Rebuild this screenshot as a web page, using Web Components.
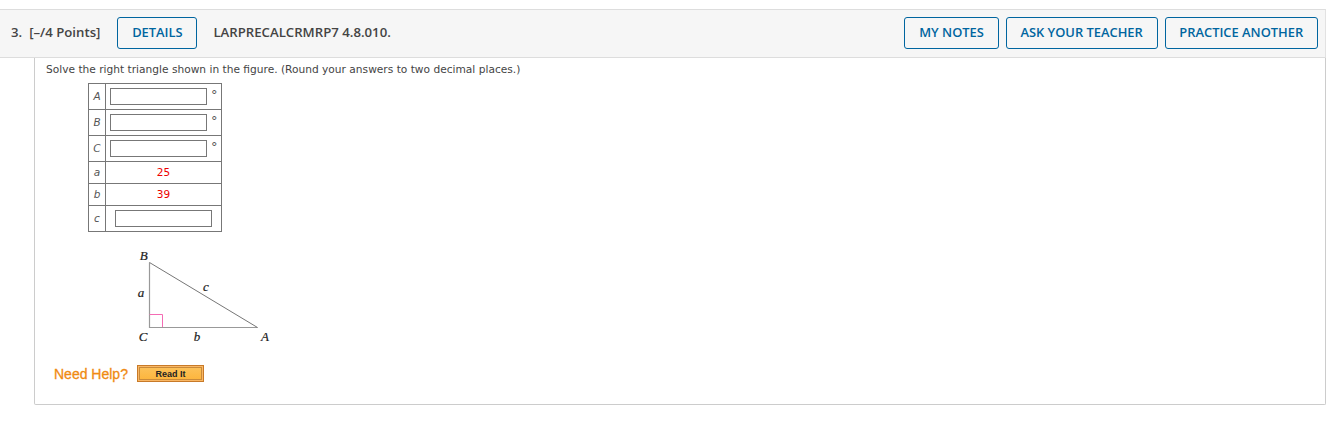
<!DOCTYPE html>
<html>
<head>
<meta charset="utf-8">
<title>Question 3</title>
<style>
    body { margin: 0; background: #fff; }
</style>
</head>
<body>
<question-card>
    <question-header slot="header" number="3." points="[–/4 Points]" code="LARPRECALCRMRP7 4.8.010."></question-header>
    <p-text>Solve the right triangle shown in the figure. (Round your answers to two decimal places.)</p-text>
    <triangle-table></triangle-table>
    <triangle-figure></triangle-figure>
    <need-help></need-help>
</question-card>

<script>
class QuestionCard extends HTMLElement {
    constructor() {
        super();
        this.attachShadow({ mode: 'open' });
        this.shadowRoot.innerHTML = /* html */ `
            <style>
                :host { display: block; padding-top: 9px; width: 1326px; }
                .body {
                    margin-left: 34px;
                    height: 347px;
                    box-sizing: border-box;
                    border: solid #ccc;
                    border-width: 0 1px 1px 1px;
                    border-radius: 0 0 2px 2px;
                    padding: 5px 0 0 11px;
                }
            </style>
            <slot name="header"></slot>
            <div class="body"><slot></slot></div>
        `;
    }
}

class QuestionHeader extends HTMLElement {
    constructor() {
        super();
        this.attachShadow({ mode: 'open' });
    }

    connectedCallback() {
        const number = this.getAttribute('number');
        const points = this.getAttribute('points');
        const code = this.getAttribute('code');
        this.shadowRoot.innerHTML = /* html */ `
            <style>
                :host {
                    display: flex;
                    align-items: center;
                    height: 49px;
                    box-sizing: border-box;
                    background: #f6f6f6;
                    border: solid #ddd;
                    border-width: 1px 0;
                    border-right: 1px solid #e2e2e2;
                    padding: 0 7px 1px 11px;
                    font: 600 13.2px "Open Sans", sans-serif;
                    color: #444;
                }
                span { margin-bottom: 2px; }
                .num { margin-right: 7px; }
                .points { margin-right: 17px; }
                .code { margin-left: 16px; margin-right: auto; }
                .actions { display: flex; gap: 7px; }
            </style>
            <span class="num">${number}</span>
            <span class="points">${points}</span>
            <action-button>DETAILS</action-button>
            <span class="code">${code}</span>
            <div class="actions">
                <action-button>MY NOTES</action-button>
                <action-button>ASK YOUR TEACHER</action-button>
                <action-button>PRACTICE ANOTHER</action-button>
            </div>
        `;
    }
}

class ActionButton extends HTMLElement {
    constructor() {
        super();
        this.attachShadow({ mode: 'open' });
        this.shadowRoot.innerHTML = /* html */ `
            <style>
                :host {
                    display: flex;
                    align-items: center;
                    height: 32px;
                    box-sizing: border-box;
                    padding: 0 13.75px 2px;
                    border: 1px solid #00659f;
                    border-radius: 3px;
                    color: #00659f;
                    font: 600 12.9px "Open Sans", sans-serif;
                    white-space: nowrap;
                }
            </style>
            <slot></slot>
        `;
    }
}

class PText extends HTMLElement {
    constructor() {
        super();
        this.attachShadow({ mode: 'open' });
        this.shadowRoot.innerHTML = /* html */ `
            <style>
                :host {
                    display: block;
                    font: 10.63px/13px "DejaVu Sans", sans-serif;
                    color: #444;
                    height: 20px;
                }
            </style>
            <slot></slot>
        `;
    }
}

class TriangleTable extends HTMLElement {
    constructor() {
        super();
        this.attachShadow({ mode: 'open' });
    }

    connectedCallback() {
        const box = '<span class="box"></span>';
        const deg = '<span class="deg">°</span>';
        const row = (name, value, h, extra = '') => `
            <div class="label" style="height:${h}px">${name}</div>
            <div class="value ${extra}" style="height:${h}px">${value}</div>
        `;
        this.shadowRoot.innerHTML = /* html */ `
            <style>
                :host {
                    display: block;
                    width: 134px;
                    margin-left: 42px;
                    font: 10.5px "DejaVu Sans", sans-serif;
                    color: #555;
                }
                .grid {
                    display: grid;
                    grid-template-columns: 17px 116px;
                    box-sizing: border-box;
                    border-top: 1px solid #777;
                    border-left: 1px solid #777;
                }
                .label, .value {
                    display: flex;
                    align-items: center;
                    justify-content: center;
                    box-sizing: border-box;
                    border-right: 1px solid #777;
                    border-bottom: 1px solid #777;
                    padding-bottom: 2px;
                }
                .label { font-style: italic; }
                .value { color: #e00; font-size: 10.5px; }
                .box {
                    display: block;
                    width: 97px;
                    height: 17px;
                    box-sizing: border-box;
                    border: 1px solid #777;
                    background: #fff;
                }
                .deg { color: #555; font-size: 13px; margin: 0 0 4px 4px; }
                .wide { justify-content: flex-start; padding-left: 4px; }
                .boxed { padding-bottom: 0; }
            </style>
            <div class="grid">
                ${row('A', box + deg, 26, 'wide boxed')}
                ${row('B', box + deg, 26, 'wide boxed')}
                ${row('C', box + deg, 26, 'wide boxed')}
                ${row('a', '25', 22)}
                ${row('b', '39', 22)}
                ${row('c', box, 26, 'boxed')}
            </div>
        `;
    }
}

class TriangleFigure extends HTMLElement {
    constructor() {
        super();
        this.attachShadow({ mode: 'open' });
        this.shadowRoot.innerHTML = /* html */ `
            <style>
                :host { display: block; width: 170px; height: 110px; margin: 8px 0 0 74px; }
                svg { display: block; }
                text {
                    font: italic 13px "Liberation Serif", serif;
                    fill: #222;
                    stroke: #222;
                    stroke-width: 0.2px;
                    text-anchor: middle;
                }
            </style>
            <svg width="170" height="110" viewBox="0 0 170 110">
                <path d="M29.500 22.500V87.500H137.500" fill="none" stroke="#999" stroke-width="1.2"/>
                <path d="M29.500 22.500L137.500 87.500" fill="none" stroke="#666" stroke-width="0.9"/>
                <path d="M29.500 74.500H42.500V87" fill="none" stroke="#f46cb4" stroke-width="1"/>
                <text x="23.700" y="19.500">B</text>
                <text x="21" y="57">a</text>
                <text x="86" y="51">c</text>
                <text x="23" y="101">C</text>
                <text x="77" y="101">b</text>
                <text x="145" y="101">A</text>
            </svg>
        `;
    }
}

class NeedHelp extends HTMLElement {
    constructor() {
        super();
        this.attachShadow({ mode: 'open' });
        this.shadowRoot.innerHTML = /* html */ `
            <style>
                :host {
                    display: flex;
                    align-items: center;
                    gap: 9px;
                    margin: 15px 0 0 8px;
                    font: 14px "Liberation Sans", sans-serif;
                    color: #f08a12;
                    -webkit-text-stroke: 0.3px #f08a12;
                }
                .read {
                    display: flex;
                    align-items: center;
                    justify-content: center;
                    width: 67px;
                    height: 17px;
                    box-sizing: border-box;
                    border: 1px solid #c87a28;
                    background: linear-gradient(#fcc35c, #fdb43a);
                    box-shadow: inset 0 0 0 1px #f9b765, inset 0 0 0 2px #c98a3a;
                    color: #222;
                    font: bold 9px "Liberation Sans", sans-serif;
                    -webkit-text-stroke: 0;
                }
            </style>
            <span>Need Help?</span>
            <span class="read">Read It</span>
        `;
    }
}

customElements.define('action-button', ActionButton);
customElements.define('question-card', QuestionCard);
customElements.define('question-header', QuestionHeader);
customElements.define('p-text', PText);
customElements.define('triangle-table', TriangleTable);
customElements.define('triangle-figure', TriangleFigure);
customElements.define('need-help', NeedHelp);
</script>
</body>
</html>
